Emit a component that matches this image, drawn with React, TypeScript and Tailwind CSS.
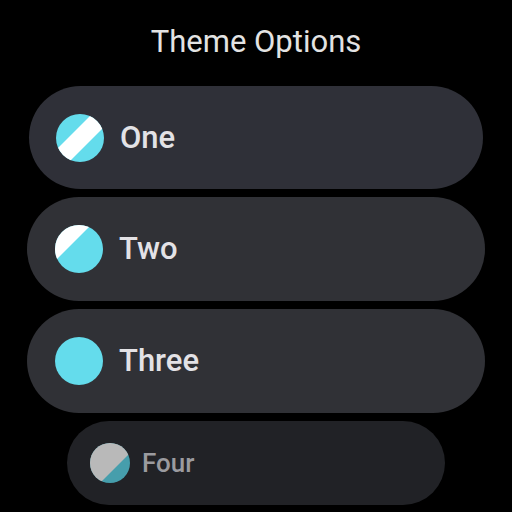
import clsx from "clsx";

type Swatch = "stripe" | "corner" | "solid" | "half";

type ThemeOption = {
  label: string;
  swatch: Swatch;
  chip: string;
  icon: string;
};

const options: ThemeOption[] = [
  {
    label: "One",
    swatch: "stripe",
    chip: "mx-[29px] h-[103px] gap-4 px-[27px] text-[31px] bg-[#2f3038] text-[#e3e2e6]",
    icon: "size-12",
  },
  {
    label: "Two",
    swatch: "corner",
    chip: "mx-[27px] h-[104px] gap-4 px-7 text-[31px] bg-[#303136] text-[#e3e2e6]",
    icon: "size-12",
  },
  {
    label: "Three",
    swatch: "solid",
    chip: "mx-[27px] h-[104px] gap-4 px-7 text-[31px] bg-[#303136] text-[#e3e2e6]",
    icon: "size-12",
  },
  {
    label: "Four",
    swatch: "half",
    chip: "mx-[67px] h-[84px] gap-3 px-[23px] text-[26px] bg-[#212226] text-[#9b9b9f]",
    icon: "size-10",
  },
];

const SwatchIcon = ({ kind, className }: { kind: Swatch; className: string }) => {
  const clip = `swatch-${kind}`;

  return (
    <svg viewBox="0 0 48 48" className={clsx("shrink-0", className)} aria-hidden="true">
      <clipPath id={clip}>
        <circle cx="24" cy="24" r="24" />
      </clipPath>
      <g clipPath={`url(#${clip})`}>
        <rect width="48" height="48" fill={kind === "half" ? "#469eac" : "#64dcec"} />
        {kind === "stripe" && <path d="M36 0H61L0 61V36Z" fill="#fff" />}
        {kind === "corner" && <path d="M0 0H36L0 36Z" fill="#fff" />}
        {kind === "half" && <path d="M0 0H60L0 60Z" fill="#b9b9b9" />}
      </g>
    </svg>
  );
};

const App = () => {
  return (
    <main className="flex min-h-screen flex-col bg-black pb-[7px] font-['Roboto',sans-serif]">
      <h1 className="pt-6 pb-[26px] text-center text-[31px] leading-9 text-[#e3e3e3]">
        Theme Options
      </h1>
      <div className="flex flex-col gap-2">
        {options.map((option) => (
          <button
            key={option.label}
            type="button"
            className={clsx(
              "flex items-center rounded-full text-left leading-9 font-medium",
              option.chip
            )}
          >
            <SwatchIcon kind={option.swatch} className={option.icon} />
            <span>{option.label}</span>
          </button>
        ))}
      </div>
    </main>
  );
};

export default App;
